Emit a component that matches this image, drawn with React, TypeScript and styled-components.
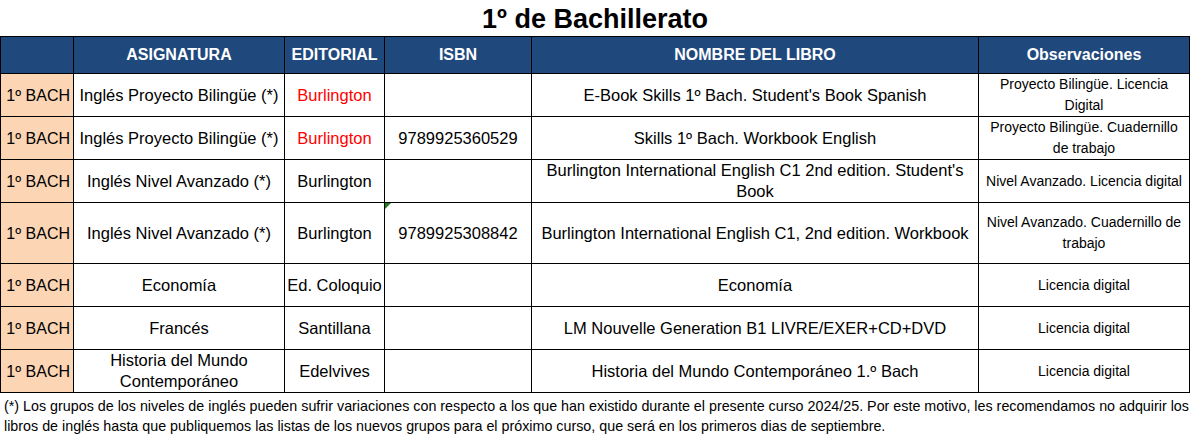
import React from 'react';
import styled, { createGlobalStyle } from 'styled-components';

const GlobalStyle = createGlobalStyle`
  html, body {
    margin: 0;
    padding: 0;
    background: #ffffff;
  }
  body {
    font-family: "Liberation Sans", Arial, sans-serif;
    color: #000;
  }
`;

type Book = {
  level: string;
  subject: string;
  publisher: string;
  publisherRed?: boolean;
  isbn: string;
  isbnFlag?: boolean;
  title: string;
  notes: string;
  tall?: boolean;
};

const books: Book[] = [
  { level: '1º BACH', subject: 'Inglés Proyecto Bilingüe (*)', publisher: 'Burlington', publisherRed: true, isbn: '', title: "E-Book Skills 1º Bach. Student's Book Spanish", notes: 'Proyecto Bilingüe. Licencia Digital' },
  { level: '1º BACH', subject: 'Inglés Proyecto Bilingüe (*)', publisher: 'Burlington', publisherRed: true, isbn: '9789925360529', title: 'Skills 1º Bach. Workbook English', notes: 'Proyecto Bilingüe. Cuadernillo de trabajo' },
  { level: '1º BACH', subject: 'Inglés Nivel Avanzado (*)', publisher: 'Burlington', isbn: '', title: "Burlington International English C1 2nd edition. Student's Book", notes: 'Nivel Avanzado. Licencia digital' },
  { level: '1º BACH', subject: 'Inglés Nivel Avanzado (*)', publisher: 'Burlington', isbn: '9789925308842', isbnFlag: true, title: 'Burlington International English C1, 2nd edition. Workbook', notes: 'Nivel Avanzado. Cuadernillo de trabajo', tall: true },
  { level: '1º BACH', subject: 'Economía', publisher: 'Ed. Coloquio', isbn: '', title: 'Economía', notes: 'Licencia digital' },
  { level: '1º BACH', subject: 'Francés', publisher: 'Santillana', isbn: '', title: 'LM Nouvelle Generation B1 LIVRE/EXER+CD+DVD', notes: 'Licencia digital' },
  { level: '1º BACH', subject: 'Historia del Mundo Contemporáneo', publisher: 'Edelvives', isbn: '', title: 'Historia del Mundo Contemporáneo 1.º Bach', notes: 'Licencia digital' },
];

const Page = styled.div`
  width: 1190px;
`;

const Title = styled.h1`
  margin: 0;
  height: 36px;
  line-height: 38px;
  text-align: center;
  font-size: 27px;
  font-weight: bold;
`;

const Table = styled.table`
  width: 1189px;
  table-layout: fixed;
  border-collapse: collapse;
`;

const HeadCell = styled.th`
  height: 36px;
  padding: 0;
  background: #1f497d;
  color: #ffffff;
  font-size: 16px;
  font-weight: bold;
  text-align: center;
  border: 1px solid #000;
`;

const Row = styled.tr<{ $tall?: boolean }>`
  height: ${p => (p.$tall ? 61 : 43)}px;
`;

const Cell = styled.td<{ $red?: boolean; $small?: boolean }>`
  position: relative;
  padding: 0 2px;
  border: 1px solid #000;
  text-align: center;
  vertical-align: middle;
  font-size: ${p => (p.$small ? 14 : 16.5)}px;
  line-height: 21px;
  color: ${p => (p.$red ? '#ff0000' : '#000')};
`;

const LevelCell = styled(Cell)`
  background: #fcd5b4;
  text-align: right;
  white-space: nowrap;
  padding-right: 3px;
  font-size: 16px;
`;

const Flag = styled.span`
  position: absolute;
  top: 0;
  left: 0;
  width: 0;
  height: 0;
  border-top: 6px solid #1e7a1e;
  border-right: 6px solid transparent;
`;

const Note = styled.p`
  margin: 0;
  padding: 3px 4px;
  font-size: 14.3px;
  line-height: 20px;
  white-space: nowrap;
`;

export default function App() {
  return (
    <Page>
      <GlobalStyle />
      <Title>1º de Bachillerato</Title>
      <Table>
        <colgroup>
          <col style={{ width: 73 }} />
          <col style={{ width: 211 }} />
          <col style={{ width: 100 }} />
          <col style={{ width: 147 }} />
          <col style={{ width: 447 }} />
          <col style={{ width: 211 }} />
        </colgroup>
        <thead>
          <tr>
            <HeadCell />
            <HeadCell>ASIGNATURA</HeadCell>
            <HeadCell>EDITORIAL</HeadCell>
            <HeadCell>ISBN</HeadCell>
            <HeadCell>NOMBRE DEL LIBRO</HeadCell>
            <HeadCell>Observaciones</HeadCell>
          </tr>
        </thead>
        <tbody>
          {books.map((b, i) => (
            <Row key={i} $tall={b.tall}>
              <LevelCell>{b.level}</LevelCell>
              <Cell>{b.subject}</Cell>
              <Cell $red={b.publisherRed}>{b.publisher}</Cell>
              <Cell>
                {b.isbnFlag && <Flag />}
                {b.isbn}
              </Cell>
              <Cell>{b.title}</Cell>
              <Cell $small>{b.notes}</Cell>
            </Row>
          ))}
        </tbody>
      </Table>
      <Note>
        (*) Los grupos de los niveles de inglés pueden sufrir variaciones con respecto a los que han existido durante el presente curso 2024/25. Por este motivo, les recomendamos no adquirir los
        <br />
        libros de inglés hasta que publiquemos las listas de los nuevos grupos para el próximo curso, que será en los primeros dias de septiembre.
      </Note>
    </Page>
  );
}
